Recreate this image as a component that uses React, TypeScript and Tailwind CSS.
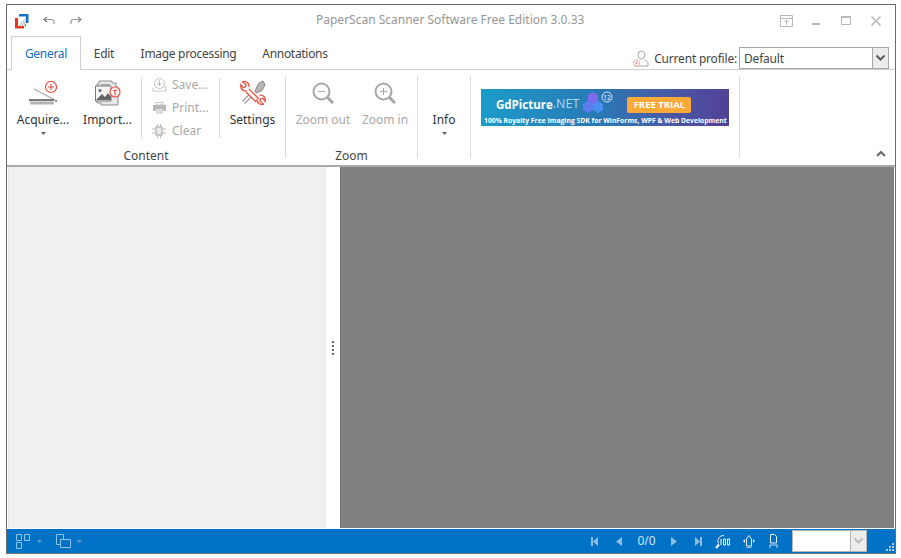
import React from "react";

const Chevron = ({ c = "#5a5a5a" }: { c?: string }) => (
  <svg width="11" height="8" viewBox="0 0 11 8"><path d="M1.500 1.500 5.500 5.500 9.500 1.500" fill="none" stroke={c} strokeWidth="2" /></svg>
);
const Caret = ({ c = "#666" }: { c?: string }) => (
  <svg width="5" height="3" viewBox="0 0 5 3"><path d="M0 0h5L2.500 3z" fill={c} /></svg>
);

const LogoIcon = () => (
  <svg width="16" height="16" viewBox="0 0 16 16">
    <path d="M5 1h9.500v9h-2.500V3.500H5z" fill="#1472c4" />
    <path d="M1 5h3v8h6v2.500H1z" fill="#e2361f" />
    <path d="M4 13 12 4v6l-3 3z" fill="#d8d8d8" />
    <path d="M12 10v3h-2z" fill="#5aa02c" />
  </svg>
);
const Undo = ({ flip }: { flip?: boolean }) => (
  <svg width="12" height="9" viewBox="0 0 12 9" style={flip ? { transform: "scaleX(-1)" } : undefined}>
    <path d="M4 1 1 3.500 4 6" fill="none" stroke="#7c7c7c" strokeWidth="1.200" />
    <path d="M1.500 3.500H8.500Q11 3.500 11 6V8" fill="none" stroke="#9a9a9a" strokeWidth="1.200" />
  </svg>
);
const Scanner = () => (
  <svg width="28" height="25" viewBox="0 0 28 25">
    <circle cx="22" cy="6" r="5.500" fill="#fff" stroke="#ee5140" strokeWidth="1.200" />
    <path d="M22 3v6M19 6h6" stroke="#ee5140" strokeWidth="1.200" />
    <path d="M5 8 26 19" stroke="#a8a8a8" strokeWidth="1.200" />
    <rect x="0" y="18" width="25" height="2" fill="#7a7a7a" />
    <rect x="1" y="20.500" width="24" height="3" fill="#b4b4b4" />
    <rect x="26" y="19" width="2" height="2" fill="#8a8a8a" />
  </svg>
);
const ImportIcon = () => (
  <svg width="27" height="26" viewBox="0 0 27 26">
    <path d="M5 1H18V3H22V7H24V25H7V23H3V4H5z" fill="#e8e8e8" stroke="#8f8f8f" />
    <rect x="7" y="4" width="9" height="1.500" fill="#a5a5a5" />
    <rect x="7" y="7" width="9" height="1.500" fill="#c0c0c0" />
    <path d="M1.500 6H17V21H1.500z" fill="#f4f4f4" stroke="#777" />
    <circle cx="6" cy="10.500" r="1.500" fill="#666" />
    <path d="M2 20 8 14l3 3 3-4 3 4v3z" fill="#666" />
    <circle cx="21" cy="12" r="5" fill="#fff" stroke="#ee5140" strokeWidth="1.200" />
    <path d="M21 9.500v6M18.800 10.500h4.400" stroke="#ee5140" strokeWidth="1.200" />
  </svg>
);
const SaveIcon = () => (
  <svg width="15" height="14" viewBox="0 0 15 14" opacity=".6">
    <circle cx="7.500" cy="5.500" r="5" fill="none" stroke="#999" />
    <path d="M7.500 2.500v5M5.500 5.500l2 2 2-2" fill="none" stroke="#888" />
    <path d="M1 9.500v3.500h13V9.500l-2-.5" fill="none" stroke="#aaa" strokeWidth="1.200" />
  </svg>
);
const PrintIcon = () => (
  <svg width="13" height="13" viewBox="0 0 13 13" opacity=".7">
    <path d="M3 1.500h7V4H3z" fill="none" stroke="#aaa" />
    <rect x="0" y="4" width="13" height="6" fill="#9c9c9c" />
    <rect x="3" y="8" width="7" height="5" fill="#d0d0d0" />
  </svg>
);
const ClearIcon = () => (
  <svg width="14" height="14" viewBox="0 0 14 14" opacity=".8">
    <rect x="4" y="3" width="6" height="8" fill="#e6e6e6" stroke="#8e8e8e" />
    <path d="M0 5h4M0 9h4M10 5h4M10 9h4M5.500 0v3M8.500 0v3M5.500 11v3M8.500 11v3" stroke="#aaa" />
  </svg>
);
const SettingsIcon = () => (
  <svg width="26" height="26" viewBox="0 0 26 26">
    <path d="M3.500 22.500 12 14" stroke="#8a8a8a" strokeWidth="4" />
    <path d="M3.500 22.500 12 14" stroke="#fff" strokeWidth="2" />
    <path d="M15 11 18.500 3.500 23 1 25 5 22 10.500 16.500 13z" fill="#b8b8b8" stroke="#858585" />
    <path d="M7.500 10.500 17.500 20.500" stroke="#ee5140" strokeWidth="5.500" />
    <path d="M7.500 10.500 17.500 20.500" stroke="#fff" strokeWidth="3" />
    <path d="M2.200 1.800 6 4.500 5.500 7 3 7.800 1 4.500C-.2 8 2.500 11.500 6.500 10.800" fill="none" stroke="#ee5140" strokeWidth="1.300" />
    <path d="M2.200 1.800C5.500.5 9.800 3 9 7" fill="none" stroke="#ee5140" strokeWidth="1.300" />
    <path d="M23.800 24.200 20 21.500l.5-2.500 2.500-.8 2 3.300C26.200 18 23.500 14.500 19.500 15.200" fill="none" stroke="#ee5140" strokeWidth="1.300" />
    <path d="M23.800 24.200C20.500 25.500 16.200 23 17 19" fill="none" stroke="#ee5140" strokeWidth="1.300" />
  </svg>
);
const Magnifier = ({ plus }: { plus?: boolean }) => (
  <svg width="22" height="22" viewBox="0 0 22 22">
    <circle cx="9.500" cy="9.500" r="8" fill="none" stroke="#a6a6a6" strokeWidth="2" />
    <path d="M15.500 15.500 21 21" stroke="#a6a6a6" strokeWidth="3" />
    <path d="M6 9.500h7" stroke="#a6a6a6" />
    {plus && <path d="M9.500 6v7" stroke="#a6a6a6" />}
  </svg>
);
const ProfileIcon = () => (
  <svg width="16" height="17" viewBox="0 0 16 17">
    <ellipse cx="8.500" cy="5" rx="3.500" ry="4" fill="none" stroke="#a8a8a8" />
    <path d="M5 10 2 12.500V16h13v-3.500L12 10" fill="none" stroke="#a8a8a8" />
    <circle cx="3.500" cy="13" r="3" fill="#fff" stroke="#ef7a6c" strokeDasharray="1.500 .8" />
    <circle cx="3.500" cy="13" r="1" fill="#ef7a6c" />
  </svg>
);

const LargeButton = ({ w, label, icon, caret, disabled }: { w: string; label: string; icon?: React.ReactNode; caret?: boolean; disabled?: boolean }) => (
  <div className={`${w} flex flex-col items-center`}>
    <div className="h-[30px] flex items-center justify-center pt-[4px]">{icon}</div>
    <div className={`mt-[5px] h-[18px] leading-[18px] whitespace-nowrap ${disabled ? "text-[#a8a8a8]" : "text-[#333]"}`}>{label}</div>
    {caret && <div className="mt-[3px] flex"><Caret /></div>}
  </div>
);

const SmallButton = ({ icon, label }: { icon: React.ReactNode; label: string }) => (
  <div className="h-[23px] flex items-center">
    <div className="w-[16px] flex justify-center">{icon}</div>
    <span className="ml-[5px] text-[#a8a8a8] leading-none">{label}</span>
  </div>
);

const Group = ({ w, label, children }: { w: string; label?: string; children?: React.ReactNode }) => (
  <div className={`${w} h-[82px] shrink-0 border-r border-[#dcdcdc] flex flex-col`}>
    <div className="flex-1 flex items-start min-h-0">{children}</div>
    {label && <div className="text-center text-[#444] h-[16px] leading-[16px] mb-[-6px]">{label}</div>}
  </div>
);

const Banner = () => (
  <div className="w-[248px] h-[37px] bg-gradient-to-r from-[#1a9cc9] via-[#2a76b4] to-[#523f96] flex flex-col overflow-hidden">
    <div className="h-[27px] flex items-center pl-[15px] pt-[4px]">
      <span className="text-white font-bold text-[11.500px] leading-none [font-family:'Open_Sans',sans-serif]">GdPicture</span>
      <span className="text-[#a9dcef] text-[12.500px] leading-none [font-family:'Open_Sans',sans-serif]">.NET</span>
      <svg width="34" height="24" viewBox="0 0 34 24" className="ml-[2px] mt-[-3px]">
        <path d="M7 4l5-3 5 3v6l-5 3-5-3z" fill="#7d6cf0" />
        <path d="M2 13l5-3 5 3v6l-5 3-5-3z" fill="#5c7df0" />
        <path d="M12 13l5-3 5 3v6l-5 3-5-3z" fill="#4b8ff0" />
        <circle cx="26" cy="6" r="5" fill="none" stroke="#fff" strokeWidth=".8" />
        <text x="26" y="8.500" fontSize="6.500" fill="#fff" textAnchor="middle" fontFamily="Open Sans">12</text>
      </svg>
      <div className="ml-[12px] w-[64px] h-[16px] bg-[#fbaa38] rounded-[2px] flex items-center justify-center text-white font-bold text-[9.500px] leading-none [font-family:'Open_Sans',sans-serif]">FREE TRIAL</div>
    </div>
    <div className="text-white font-bold text-[6.800px] leading-[9px] pl-[3px] whitespace-nowrap [font-family:'Open_Sans',sans-serif]">100% Royalty Free Imaging SDK for WinForms, WPF &amp; Web Development</div>
  </div>
);

const Tab = ({ label, active, w }: { label: string; active?: boolean; w: string }) => (
  <div className={`${w} flex items-center justify-center pt-[1px] tracking-[-.3px] ${active ? "border border-b-0 border-[#cfcfcf] bg-white text-[#0f6fc0] mb-[-1px] h-[34px] relative" : "h-[34px] text-[#444]"}`}>{label}</div>
);

const StatusNav = ({ d, w = 7 }: { d: string; w?: number }) => (
  <svg width={w} height="9" viewBox={`0 0 ${w} 9`}><path d={d} fill="#8fbde3" /></svg>
);

export default function App() {
  return (
    <div className="w-[901px] h-[558px] bg-white pt-[4px] pl-[6px] [font-family:'Noto_Sans',sans-serif] text-[12px]">
      <div className="w-[890px] h-[550px] border border-[#6b6b6b] bg-white flex flex-col overflow-hidden border-b-[#777]">
        {/* Title bar */}
        <div className="h-[31px] shrink-0 flex items-center relative">
          <div className="ml-[7px] flex"><LogoIcon /></div>
          <div className="ml-[13px] flex"><Undo /></div>
          <div className="ml-[15px] flex"><Undo flip /></div>
          <div className="absolute left-[309px] top-[7px] text-[#969696] leading-[16px] whitespace-nowrap">PaperScan Scanner Software Free Edition 3.0.33</div>
          <div className="ml-auto flex items-center mr-[14px]">
            <svg width="13" height="12" viewBox="0 0 13 12"><path d="M.5.500h12v11H.500z M.5 3.500h12M6.500 10V5M4.500 7l2-2 2 2" fill="none" stroke="#b8b8b8" /></svg>
            <svg width="8" height="2" viewBox="0 0 8 2" className="ml-[19px] mt-[7px]"><rect width="8" height="2" fill="#b8b8b8" /></svg>
            <svg width="10" height="9" viewBox="0 0 10 9" className="ml-[21px]"><path d="M.5.500h9v8h-9z" fill="none" stroke="#b8b8b8" /><rect width="10" height="2" fill="#b8b8b8" /></svg>
            <svg width="10" height="10" viewBox="0 0 10 10" className="ml-[20px]"><path d="M.5.500l9 9M9.500.500l-9 9" stroke="#b8b8b8" strokeWidth="1.500" /></svg>
          </div>
        </div>
        {/* Tabs row */}
        <div className="h-[34px] shrink-0 flex items-start border-b border-[#cfcfcf] pl-[4px]">
          <Tab label="General" active w="w-[70px]" />
          <Tab label="Edit" w="w-[46px]" />
          <Tab label="Image processing" w="w-[123px]" />
          <Tab label="Annotations" w="w-[90px]" />
          <div className="ml-auto flex items-center mr-[6px] mt-[11px]">
            <ProfileIcon />
            <span className="ml-[5px] pt-[1px] text-[#444] tracking-[-.2px]">Current profile:</span>
            <div className="ml-[2px] w-[150px] h-[22px] border border-[#a8a8a8] bg-white flex items-center">
              <span className="pl-[4px] pt-[1px] flex-1 text-[#444] tracking-[-.2px]">Default</span>
              <div className="w-[16px] h-full border-l border-[#a8a8a8] bg-[#ececec] flex items-center justify-center"><Chevron /></div>
            </div>
          </div>
        </div>
        {/* Ribbon */}
        <div className="h-[97px] shrink-0 flex pt-[6px] border-b-2 border-[#a9a9a9]">
          <Group w="w-[279px]" label="Content">
            <LargeButton w="w-[72px]" label="Acquire..." icon={<Scanner />} caret />
            <LargeButton w="w-[57px]" label="Import..." icon={<ImportIcon />} />
            <div className="ml-[5px] w-px h-[60px] mt-[2px] bg-[#dcdcdc]" />
            <div className="w-[77px] pl-[9px] mt-[-3px] flex flex-col">
              <SmallButton icon={<SaveIcon />} label="Save..." />
              <SmallButton icon={<PrintIcon />} label="Print..." />
              <SmallButton icon={<ClearIcon />} label="Clear" />
            </div>
            <div className="w-px h-[60px] mt-[2px] bg-[#dcdcdc]" />
            <LargeButton w="w-[65px]" label="Settings" icon={<SettingsIcon />} />
          </Group>
          <Group w="w-[132px]" label="Zoom">
            <div className="w-[6px]" />
            <LargeButton w="w-[62px]" label="Zoom out" icon={<Magnifier />} disabled />
            <LargeButton w="w-[62px]" label="Zoom in" icon={<Magnifier plus />} disabled />
          </Group>
          <Group w="w-[53px]">
            <LargeButton w="w-[52px]" label="Info" caret />
          </Group>
          <Group w="w-[269px]">
            <div className="ml-[10px] mt-[13px] flex"><Banner /></div>
          </Group>
          <div className="flex-1 flex items-end justify-end pb-[8px] pr-[9px]">
            <svg width="10" height="7" viewBox="0 0 10 7"><path d="M1 6 5 2l4 4" fill="none" stroke="#666" strokeWidth="2" /></svg>
          </div>
        </div>
        {/* Main */}
        <div className="flex-1 flex min-h-0 pl-[1px] pr-[1px]">
          <div className="w-[318px] bg-[#f0f0f0] border-l border-[#e4e4e4]" />
          <div className="w-[14px] bg-white flex flex-col items-center justify-center gap-[2px] pt-[1px]">
            <div className="w-[2px] h-[2px] bg-[#666]" />
            <div className="w-[2px] h-[2px] bg-[#666]" />
            <div className="w-[2px] h-[2px] bg-[#666]" />
            <div className="w-[2px] h-[2px] bg-[#666]" />
          </div>
          <div className="flex-1 bg-[#808080] border-l border-[#6f6f6f]" />
        </div>
        {/* Status bar */}
        <div className="h-[24px] shrink-0 mt-[1px] bg-[#0072c6] flex items-center relative">
          <svg width="15" height="15" viewBox="0 0 15 15" className="ml-[9px]"><path d="M.5.500h5v6h-5zM8.500.500h5v6h-5zM.5 8.500h5v6h-5z" fill="none" stroke="#8fc4ee" /></svg>
          <div className="ml-[6px] flex"><Caret c="#6f98c0" /></div>
          <svg width="15" height="14" viewBox="0 0 15 14" className="ml-[14px]"><path d="M.5.500h7v10h-7z" fill="none" stroke="#8fc4ee" /><path d="M4.500 5.500h10v8h-10z" fill="#0072c6" stroke="#8fc4ee" /></svg>
          <div className="ml-[6px] flex"><Caret c="#6f98c0" /></div>
          <div className="ml-[509px] flex items-center">
            <StatusNav d="M0 0h2v9H0zM7 0v9L2 4.500z" />
            <div className="ml-[18px] flex"><StatusNav w={6} d="M6 0v9L0 4.500z" /></div>
            <span className="ml-[15px] w-[19px] text-[#cfe4f6] leading-none text-center whitespace-nowrap">0/0</span>
            <div className="ml-[15px] flex"><StatusNav w={6} d="M0 0v9L6 4.500z" /></div>
            <div className="ml-[18px] flex"><StatusNav d="M0 0v9L5 4.500zM5 0h2v9H5z" /></div>
            <svg width="16" height="15" viewBox="0 0 16 15" className="ml-[13px]">
              <path d="M3.500 9.500A5.500 5.500 0 0 1 9 1.500" fill="none" stroke="#e6f1fa" />
              <path d="M4 10.500 1 14" stroke="#fff" strokeWidth="2" />
              <path d="M6 5v6M8.500 5h2v6h-2zM12.500 5h2v6h-2z" fill="none" stroke="#fff" />
            </svg>
            <svg width="14" height="14" viewBox="0 0 14 14" className="ml-[11px]">
              <path d="M4.500 5 7 1.500 9.500 5v7h-5z" fill="none" stroke="#e6f1fa" />
              <path d="M3 5v4L1 7zM11 5v4l2-2z" fill="#e6f1fa" />
              <path d="M4.500 13.500h5" stroke="#9cc9ec" />
            </svg>
            <svg width="9" height="14" viewBox="0 0 9 14" className="ml-[13px]">
              <path d="M1.500.500h4l2 2V9h-6z" fill="none" stroke="#e6f1fa" />
              <path d="M.5 11h8M1 11v3M8 11v3" stroke="#b8d8f2" />
            </svg>
            <div className="ml-[14px] w-[75px] h-[22px] bg-white border border-[#b5b5b5] flex justify-end">
              <div className="w-[16px] h-full border-l border-[#b5b5b5] bg-[#ececec] flex items-center justify-center"><Chevron c="#bbb" /></div>
            </div>
          </div>
          <svg width="8" height="8" viewBox="0 0 8 8" className="ml-auto mr-[1px] mt-[12px]"><path d="M6 0h2v2H6zM3 3h2v2H3zM6 3h2v2H6zM0 6h2v2H0zM3 6h2v2H3zM6 6h2v2H6z" fill="#a8cdea" /></svg>
        </div>
      </div>
    </div>
  );
}
